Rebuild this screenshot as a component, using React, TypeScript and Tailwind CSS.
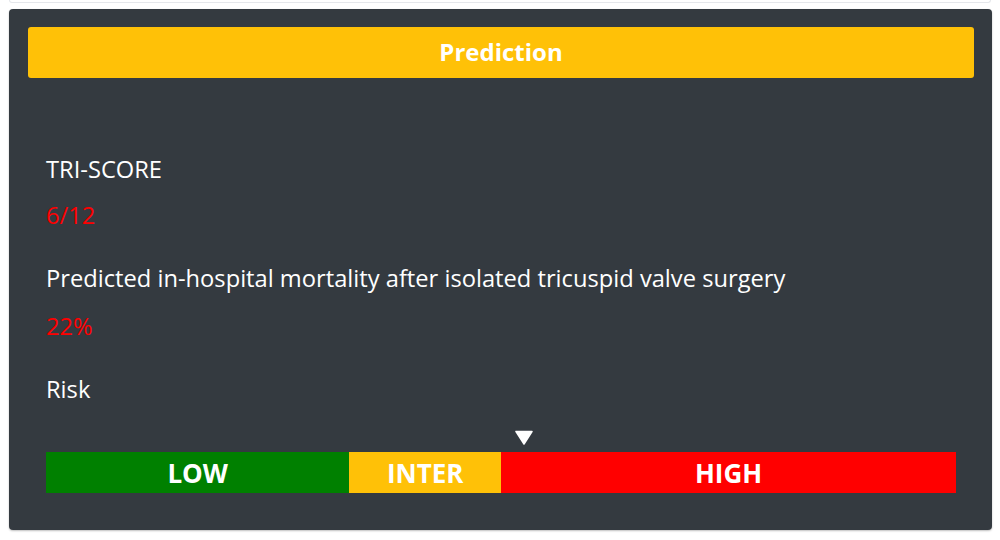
import { useState } from "react"

const segments = [
  { label: "LOW", span: 4, color: "bg-[#008000]" },
  { label: "INTER", span: 2, color: "bg-[#ffc107]" },
  { label: "HIGH", span: 6, color: "bg-[#ff0000]" },
]

const App = () => {
  const [score] = useState(6.3)
  const max = 12

  return (
    <div
      className="w-[1000px] h-[540px] bg-white overflow-hidden"
      style={{ fontFamily: '"Open Sans", "Noto Sans", sans-serif' }}
    >
      {/* edge of the card above */}
      <div className="mx-[9px] h-[3px] border-b border-x border-gray-200 rounded-b-[4px]" />

      <div className="ml-[9px] mt-[6px] w-[983px] h-[521px] bg-[#343a40] rounded-[4px] pt-[18px] pl-[19px] pr-[18px] shadow-[0_1px_2px_rgba(0,0,0,0.25)]">
        <div className="h-[51px] bg-[#ffc107] rounded-[3px] flex items-center justify-center text-white font-bold text-[24px] pb-[2px]">
          Prediction
        </div>

        <div className="pl-[18px] pr-[18px] pt-[73px] text-white text-[23.7px] leading-[36px]">
          <div>TRI-SCORE</div>
          <div className="mt-[10px] text-[#ff0000]">6/12</div>
          <div className="mt-[27px]">
            Predicted in-hospital mortality after isolated tricuspid valve surgery
          </div>
          <div className="mt-[12px] text-[#ff0000]">22%</div>
          <div className="mt-[27px]">Risk</div>

          <div className="relative mt-[45px]">
            <svg
              className="absolute -top-[22px]"
              style={{ left: `calc(${(score / max) * 100}% - 9px)` }}
              width="18"
              height="15"
              viewBox="0 0 18 15"
            >
              <path d="M1 1.5 L17 1.5 L9 14 Z" fill="white" stroke="white" strokeWidth="1.5" strokeLinejoin="round" />
            </svg>
            <div className="flex h-[41px]">
              {segments.map((s) => (
                <div
                  key={s.label}
                  className={`${s.color} flex items-center justify-center text-white font-bold text-[26px]`}
                  style={{ flex: s.span }}
                >
                  {s.label}
                </div>
              ))}
            </div>
          </div>
        </div>
      </div>
    </div>
  )
}

export default App
